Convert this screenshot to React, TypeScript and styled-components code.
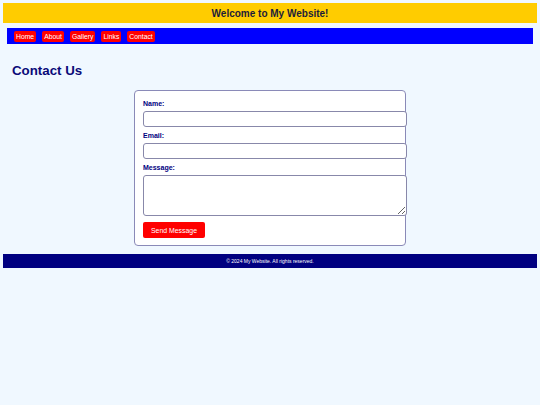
import { FC } from "react";
import styled, { createGlobalStyle } from "styled-components";

const GlobalStyle = createGlobalStyle`
    html, body {
        margin: 0;
        padding: 0;
        background: #f0f8ff;
        font-family: "Liberation Sans", Arial, sans-serif;
    }
`

const Page = styled.div`
    padding: 3px;
    display: flex;
    flex-direction: column;
`

const Header = styled.header`
    height: 20px;
    background: #ffcc00;
    display: flex;
    align-items: center;
    justify-content: center;
`

const Title = styled.h1`
    margin: 0;
    font-size: 10px;
    font-weight: 700;
    color: #1c1c3a;
`

const Nav = styled.nav`
    margin: 5px 4px 0;
    height: 16px;
    box-sizing: border-box;
    padding: 0 7px;
    background: #0000ff;
    display: flex;
    align-items: center;
    gap: 6px;
`

const NavLink = styled.a`
    display: block;
    height: 11px;
    line-height: 11px;
    padding: 0 2px;
    background: #ff0000;
    border-radius: 2px;
    color: #fff;
    font-size: 6.8px;
    text-decoration: none;
`

const Main = styled.main`
    padding: 0 9px;
    display: flex;
    flex-direction: column;
`

const Heading = styled.h2`
    margin: 19px 0 11px;
    font-size: 13.3px;
    line-height: 16px;
    font-weight: 700;
    color: #0a0a78;
`

const Card = styled.form`
    align-self: center;
    width: 272px;
    box-sizing: border-box;
    padding: 8px 8px 7px;
    background: #fff;
    border: 1px solid #8a8ab8;
    border-radius: 4px;
    display: flex;
    flex-direction: column;
`

const Label = styled.label`
    display: block;
    font-size: 7px;
    line-height: 9px;
    font-weight: 700;
    color: #000080;
    margin-bottom: 3px;
`

const Input = styled.input`
    display: block;
    width: 100%;
    height: 14px;
    padding: 0 4px;
    margin: 0 0 4px;
    border: 1px solid #8888aa;
    border-radius: 3px;
    background: #fff;
    font-size: 7px;
`

const TextArea = styled.textarea`
    display: block;
    width: 100%;
    height: 39px;
    padding: 0 4px;
    margin: 0 0 6px;
    border: 1px solid #8888aa;
    border-radius: 3px;
    background: #fff;
    font-size: 7px;
`

const SendButton = styled.button`
    align-self: flex-start;
    height: 16px;
    padding: 0 8px;
    border: none;
    border-radius: 2px;
    background: #ff0000;
    color: #fff;
    font-family: "Liberation Sans", Arial, sans-serif;
    font-size: 6.9px;
`

const Footer = styled.footer`
    margin-top: 8px;
    height: 14px;
    background: #000080;
    color: #fff;
    font-size: 5px;
    display: flex;
    align-items: center;
    justify-content: center;
`

const links = ["Home", "About", "Gallery", "Links", "Contact"];

const App: FC = () => {
    return (
        <Page>
            <GlobalStyle />
            <Header>
                <Title>Welcome to My Website!</Title>
            </Header>
            <Nav>
                {links.map((l) => (
                    <NavLink key={l} href="#">{l}</NavLink>
                ))}
            </Nav>
            <Main>
                <Heading>Contact Us</Heading>
                <Card onSubmit={(e) => e.preventDefault()}>
                    <Label htmlFor="name">Name:</Label>
                    <Input id="name" type="text" />
                    <Label htmlFor="email">Email:</Label>
                    <Input id="email" type="email" />
                    <Label htmlFor="message">Message:</Label>
                    <TextArea id="message" />
                    <SendButton type="submit">Send Message</SendButton>
                </Card>
            </Main>
            <Footer>© 2024 My Website. All rights reserved.</Footer>
        </Page>
    )
}

export default App;
